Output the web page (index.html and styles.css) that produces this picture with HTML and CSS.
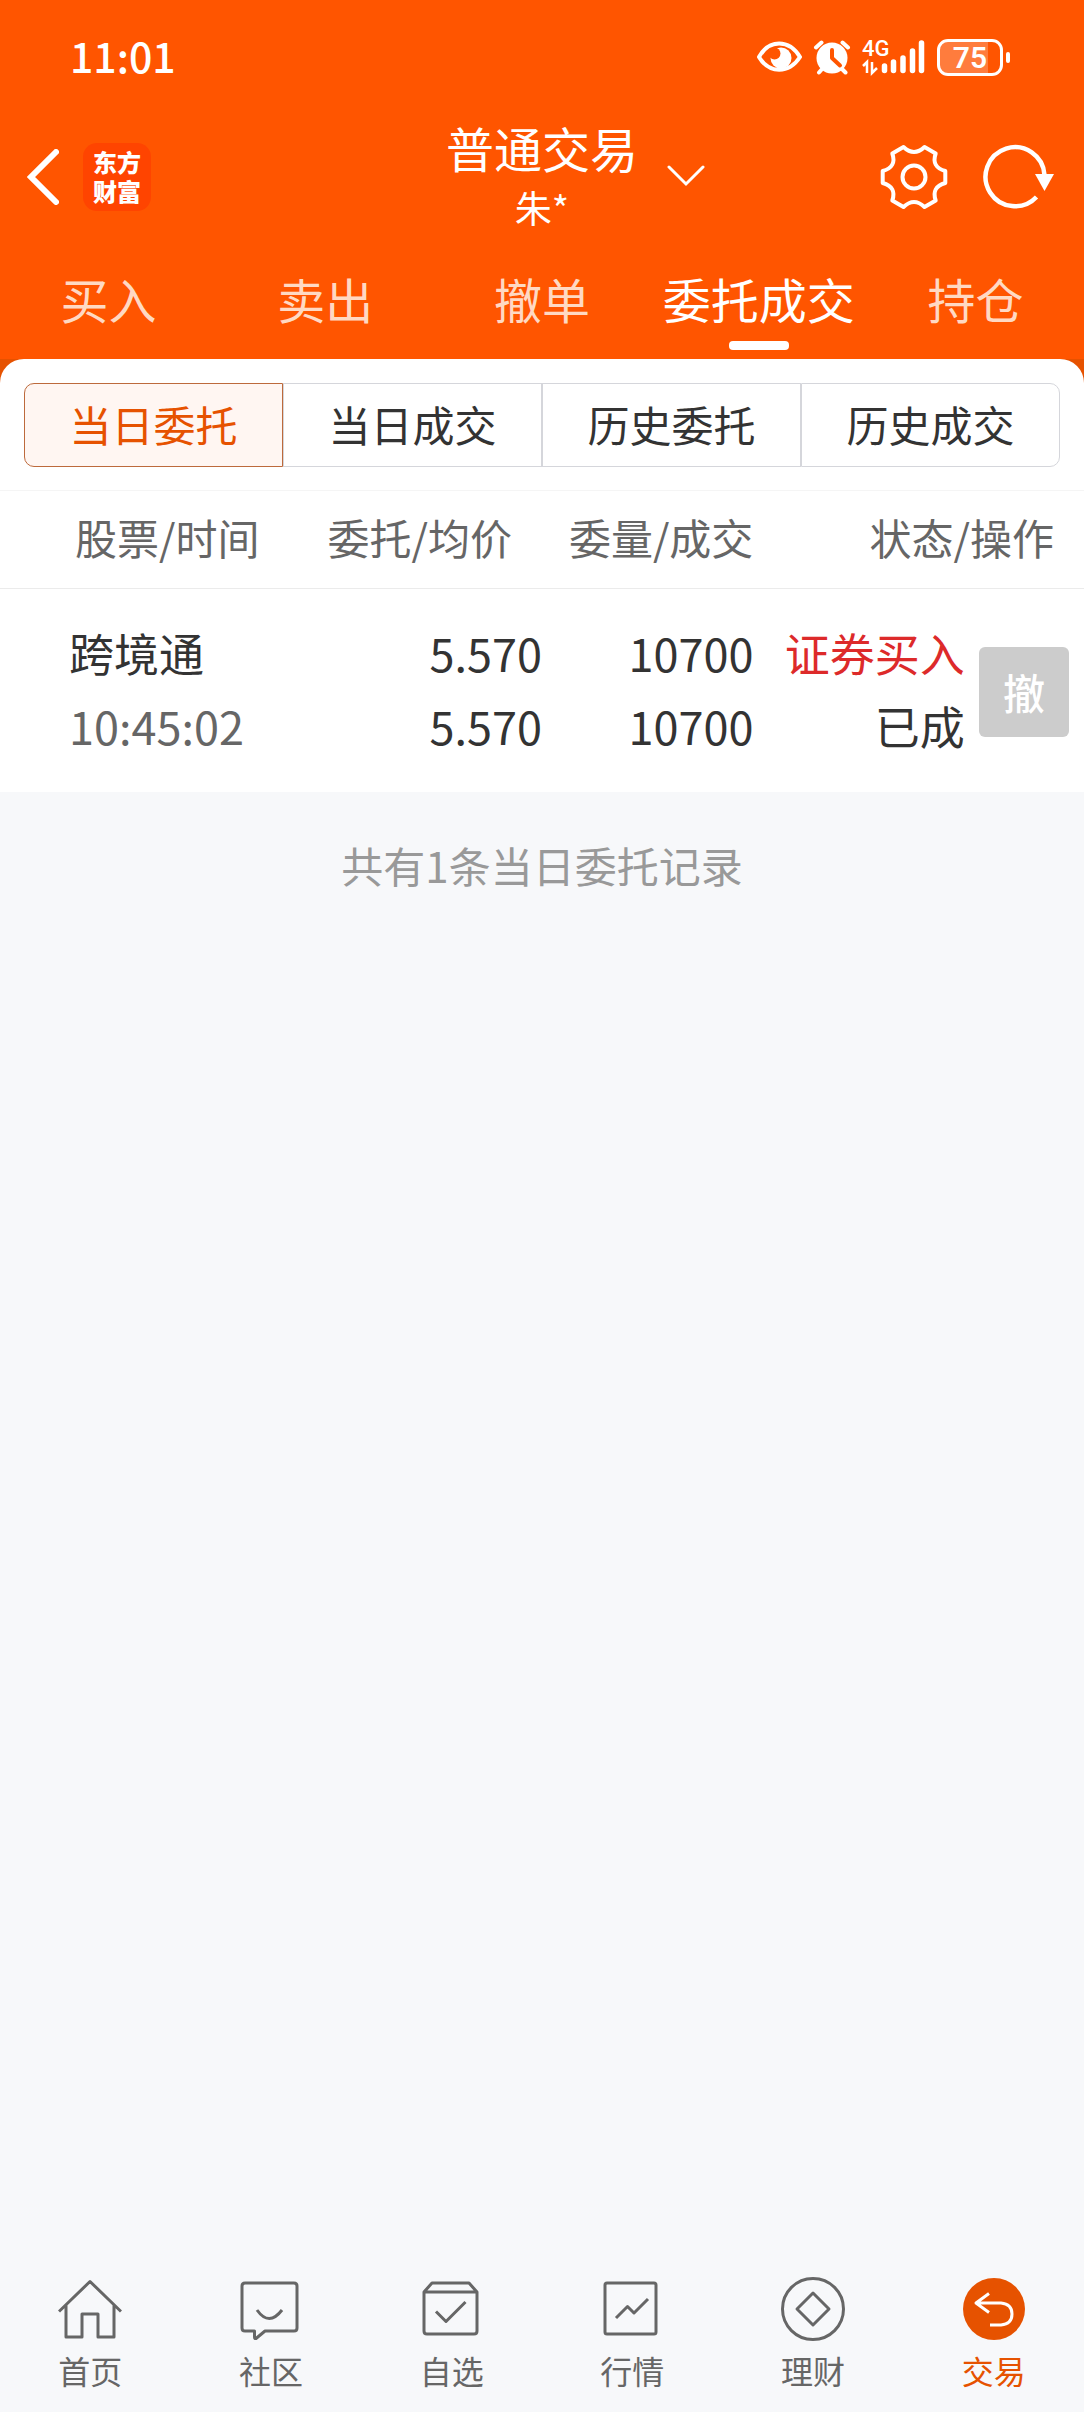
FILE: index.html
```html
<!DOCTYPE html>
<html lang="zh-CN">
<head>
<meta charset="utf-8">
<meta name="viewport" content="width=device-width">
<title>普通交易</title>
<link rel="stylesheet" href="styles.css">
</head>
<body>
<div class="app">
  <header class="top">
    <div class="status-bar">
      <time class="clock">11:01</time>
      <div class="status-icons">
        <svg width="46" height="34" viewBox="0 0 46 34" aria-hidden="true">
          <path d="M3 17C13 -1 33 -1 44 17C33 34 13 34 3 17Z" fill="none" stroke="#fff" stroke-width="4" stroke-linejoin="round"/>
          <circle cx="25" cy="18" r="10.5" fill="#fff"/>
          <circle cx="18.500" cy="13.500" r="6" class="fill-brand"/>
        </svg>
        <svg width="38" height="36" viewBox="0 0 38 36" aria-hidden="true">
          <circle cx="19" cy="19" r="15.500" fill="#fff"/>
          <path d="M3 8.500L8.500 3.500M29.500 3.500L35 8.500M6 33.500L10 29M32.500 33.500L28 29" stroke="#fff" stroke-width="4" stroke-linecap="round"/>
          <path d="M19 11V19L27 26.500" fill="none" class="stroke-brand" stroke-width="4" stroke-linecap="round" stroke-linejoin="round"/>
        </svg>
        <svg class="signal" width="64" height="48" viewBox="0 -6 64 48">
          <text x="0" y="17" class="network">4G</text>
          <path d="M1 27L5 23V34M10 23V34L15 29" fill="none" stroke="#fff" stroke-width="2.500"/>
          <path d="M22.500 27V31.500M31.500 23V31.500M41 19V31.500M50.500 12V31.500M59.500 4V31.500" stroke="#fff" stroke-width="5.500" stroke-linecap="round"/>
        </svg>
        <div class="battery"><span class="battery-body">75</span><span class="battery-tip"></span></div>
      </div>
    </div>

    <div class="title-bar">
      <div class="title-left">
        <button class="icon-button" aria-label="返回">
          <svg width="32" height="56" viewBox="0 0 32 56"><path d="M29 3L4 28L29 53" fill="none" stroke="#fff" stroke-width="6" stroke-linecap="round" stroke-linejoin="miter"/></svg>
        </button>
        <a class="logo" href="#">东方<br>财富</a>
      </div>
      <div class="title">
        <h1>普通交易</h1>
        <p>朱*</p>
      </div>
      <div class="title-right">
        <button class="icon-button" aria-label="切换账户">
          <svg width="38" height="24" viewBox="0 0 38 24"><path d="M2 2L19 19L36 2" fill="none" stroke="#fff" stroke-width="3" stroke-linecap="round"/></svg>
        </button>
        <div class="tools">
          <button class="icon-button" aria-label="设置">
            <svg width="68" height="68" viewBox="-34 -34 68 68"><g fill="none" stroke="#fff" stroke-width="4" stroke-linejoin="round"><path d="M31.300 -6V6Q17 10 21.700 23.500L10.500 30Q0 20 -10.500 30L-21.700 23.500Q-17 10 -31.300 6V-6Q-17 -10 -21.700 -23.500L-10.500 -30Q0 -20 10.500 -30L21.700 -23.500Q17 -10 31.300 -6Z"/><circle r="11.500"/></g></svg>
          </button>
          <button class="icon-button" aria-label="刷新">
            <svg width="74" height="68" viewBox="0 0 74 68"><path d="M62.500 32A29.500 29.500 0 1 0 54.500 54" fill="none" stroke="#fff" stroke-width="4.500"/><path d="M53 31H72L62.500 48Z" fill="#fff"/></svg>
          </button>
        </div>
      </div>
    </div>

    <nav class="tabs">
      <a href="#">买入</a>
      <a href="#">卖出</a>
      <a href="#">撤单</a>
      <a href="#" class="active" aria-current="page">委托成交</a>
      <a href="#">持仓</a>
    </nav>
  </header>

  <main>
    <div class="sheet-wrap">
      <section class="sheet">
        <div class="segments">
          <button class="active">当日委托</button>
          <button>当日成交</button>
          <button>历史委托</button>
          <button>历史成交</button>
        </div>
        <table class="orders">
          <colgroup><col class="c-stock"><col class="c-price"><col class="c-qty"><col class="c-state"><col class="c-action"></colgroup>
          <thead>
            <tr>
              <th class="stock">股票/时间</th>
              <th class="price">委托/均价</th>
              <th>委量/成交</th>
              <th class="state" colspan="2">状态/操作</th>
            </tr>
          </thead>
          <tbody>
            <tr>
              <td class="stock">跨境通<br><span class="time">10:45:02</span></td>
              <td>5.570<br>5.570</td>
              <td>10700<br>10700</td>
              <td><span class="buy">证券买入</span><br>已成</td>
              <td class="action"><button class="cancel">撤</button></td>
            </tr>
          </tbody>
        </table>
      </section>
    </div>
    <p class="summary">共有1条当日委托记录</p>
  </main>

  <nav class="bottom-nav">
    <a href="#">
      <svg viewBox="0 0 64 64"><path d="M1 34.500L32 4.500L63 34.500M8 28V60H24V37H40V60H56V28"/></svg>
      首页
    </a>
    <a href="#">
      <svg viewBox="0 0 64 64"><path d="M6 6H55Q58 6 58 9V51Q58 54 55 54H26L17 61.500Q15.500 62 15.500 60V54H6Q3 54 3 51V9Q3 6 6 6ZM18 33Q30 50 43 33"/></svg>
      社区
    </a>
    <a href="#">
      <svg viewBox="0 0 64 64"><path d="M4 15L12 6H49L57 15V54Q57 57 54 57H7Q4 57 4 54ZM4 15H57M16 34.500L26 44.500L45.500 25"/></svg>
      自选
    </a>
    <a href="#">
      <svg viewBox="0 0 64 64"><rect x="5" y="6" width="51" height="51" rx="2"/><path d="M16 41L27.500 29.500L34 36L48 22"/></svg>
      行情
    </a>
    <a href="#">
      <svg viewBox="0 0 64 64"><circle cx="32" cy="32" r="30.500"/><path d="M32 16L48 32L32 48L16 32Z"/></svg>
      理财
    </a>
    <a href="#" class="active" aria-current="page">
      <svg viewBox="0 0 64 64"><circle class="disc" cx="32" cy="32" r="31"/><path class="arrow" d="M27 16.500L14 26L27 35.500M14 26H39Q50 27 50 37Q50 47 39 48H28"/></svg>
      交易
    </a>
  </nav>
</div>
</body>
</html>
```
FILE: styles.css
```css
:root {
  --brand: #ff5500;
  --accent: #e65200;
  --ink: #333;
  --muted: #666;
}

* { box-sizing: border-box; }

body {
  margin: 0;
  background: #f7f8fa;
  color: var(--ink);
  font-family: "Noto Sans CJK SC", sans-serif;
}

a { color: inherit; text-decoration: none; }

button {
  margin: 0;
  padding: 0;
  border: 0;
  background: none;
  color: inherit;
  font: inherit;
}

h1, p { margin: 0; font-weight: 400; }
svg { display: block; }

.app {
  display: flex;
  flex-direction: column;
  min-height: 100vh;
}

main { flex: 1; }

.top { background: var(--brand); color: #fff; }

/* Status bar */
.status-bar {
  display: flex;
  align-items: center;
  justify-content: space-between;
  height: 114px;
  padding: 0 74px 0 70px;
}

.clock { padding-bottom: 4px; font-size: 41px; font-weight: 500; line-height: 64px; }
.status-icons { display: flex; align-items: center; gap: 11px; }
.fill-brand { fill: var(--brand); }
.stroke-brand { stroke: var(--brand); }
.network { fill: #fff; font: 500 22px Roboto, sans-serif; }

.battery { display: flex; align-items: center; gap: 3px; }

.battery-body {
  width: 66px;
  border: 3px solid #fff;
  border-radius: 11px;
  background: linear-gradient(to right, #ff7c3d 80%, transparent 80%);
  font: 600 30px/31px Roboto, sans-serif;
  text-align: center;
}

.battery-tip { width: 4px; height: 11px; border-radius: 2px; background: #fff; }

/* Title bar */
.title-bar {
  display: grid;
  grid-template-columns: 1fr auto 1fr;
  align-items: center;
  height: 126px;
}

.title-left { display: flex; align-items: center; gap: 24px; padding-left: 27px; }

.logo {
  padding: 4px 10px 6px;
  border-radius: 14px;
  background: #ff4400;
  font-size: 24px;
  font-weight: 900;
  line-height: 29px;
}

.title { padding-bottom: 4px; text-align: center; }
.title h1 { font-size: 48px; line-height: 64px; }
.title p { font-size: 37px; line-height: 56px; }

.title-right {
  display: flex;
  align-items: center;
  justify-content: space-between;
  padding: 0 28px 0 29px;
}

.tools { display: flex; gap: 34px; }

/* Section tabs */
.tabs {
  display: grid;
  grid-template-columns: repeat(5, 1fr);
  padding: 26px 0 9px;
}

.tabs a {
  display: flex;
  flex-direction: column;
  align-items: center;
  gap: 11px;
  color: #ffd9c3;
  font-size: 48px;
  line-height: 64px;
  white-space: nowrap;
}

.tabs a::after {
  content: "";
  width: 60px;
  height: 9px;
  border-radius: 4px;
}

.tabs .active { color: #fff; }
.tabs .active::after { background: #fff; }

/* Order list */
.sheet-wrap { background: var(--accent); }

.sheet {
  padding-top: 24px;
  border-radius: 24px 24px 0 0;
  background: #fff;
}

.segments {
  display: grid;
  grid-template-columns: repeat(4, 1fr);
  padding: 0 24px;
}

.segments button {
  padding-bottom: 2px;
  border: 1px solid #d5d6db;
  font-size: 42px;
  line-height: 80px;
}

.segments button:first-child { border-radius: 10px 0 0 10px; }
.segments button:last-child { border-radius: 0 10px 10px 0; }

.segments .active {
  border-color: #bd6a3c;
  background: #fff6f2;
  color: var(--accent);
}

.orders {
  width: 100%;
  margin-top: 23px;
  border-collapse: separate;
  border-spacing: 0;
  table-layout: fixed;
}

.c-stock, .c-price { width: 25%; }
.c-qty, .c-state { width: 19.5%; }
.c-action { width: 11%; }

.orders th {
  padding: 14px 0 19px;
  border-top: 1px solid #f5f5f5;
  border-bottom: 1px solid #ebebeb;
  color: var(--muted);
  font-size: 42px;
  font-weight: 400;
  line-height: 64px;
  text-align: right;
  white-space: nowrap;
}

.orders td {
  padding: 27px 0 30px;
  font-size: 45px;
  line-height: 73px;
  text-align: right;
  white-space: nowrap;
}

.orders th.stock { padding-left: 75px; text-align: left; }
.orders td.stock { padding-left: 69px; text-align: left; }
.orders th.price, .orders th.state { padding-right: 30px; }
.orders td.action { padding: 30px 15px 27px 0; }
.time { color: var(--muted); }
.buy { color: #dd2a2a; }

.cancel {
  width: 90px;
  border-radius: 6px;
  background: #ccc;
  color: #fff;
  font-size: 42px;
  font-weight: 500;
  line-height: 90px;
  vertical-align: middle;
}

.summary {
  padding-top: 41px;
  color: #999;
  font-size: 42px;
  line-height: 64px;
  text-align: center;
}

/* Bottom navigation */
.bottom-nav {
  display: grid;
  grid-template-columns: repeat(6, 1fr);
  padding-bottom: 22px;
}

.bottom-nav a {
  display: flex;
  flex-direction: column;
  align-items: center;
  gap: 9px;
  color: var(--muted);
  font-size: 32px;
  line-height: 40px;
}

.bottom-nav svg {
  width: 64px;
  height: 64px;
  fill: none;
  stroke: currentColor;
  stroke-width: 3;
  stroke-linejoin: round;
}

.bottom-nav .active { color: var(--accent); }
.bottom-nav .disc { fill: var(--accent); stroke: none; }
.bottom-nav .arrow { stroke: #fff; }
```
